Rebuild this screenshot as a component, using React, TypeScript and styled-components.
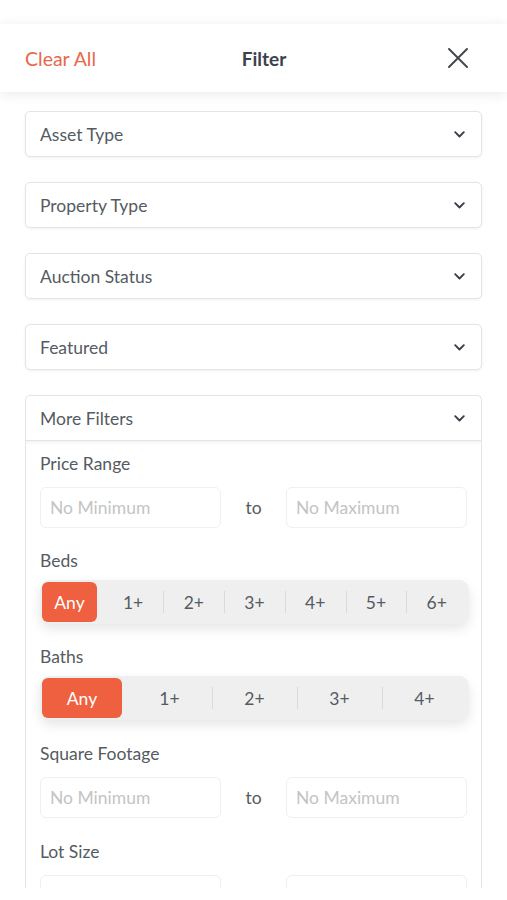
import styled, { createGlobalStyle } from "styled-components";

const GlobalStyle = createGlobalStyle`
  * { box-sizing: border-box; }
  body {
    margin: 0;
    background: #ffffff;
    font-family: Lato, "Open Sans", "Liberation Sans", sans-serif;
    color: #555b62;
  }
`;

const ORANGE = "#ee603f";

const bedOptions = ["Any", "1+", "2+", "3+", "4+", "5+", "6+"];
const bathOptions = ["Any", "1+", "2+", "3+", "4+"];

function Chevron() {
  return (
    <svg width="11" height="7" viewBox="0 0 11 7" fill="none">
      <path d="M1.2 1.2 L5.5 5.5 L9.8 1.2" stroke="#3a4048" strokeWidth="1.9" strokeLinecap="round" strokeLinejoin="round" />
    </svg>
  );
}

function CloseIcon() {
  return (
    <svg width="22" height="22" viewBox="0 0 22 22" fill="none">
      <path d="M2 2 L20 20 M20 2 L2 20" stroke="#44484d" strokeWidth="2" strokeLinecap="round" />
    </svg>
  );
}

function Dropdown({ label }: { label: string }) {
  return (
    <Select>
      <SelectLabel>{label}</SelectLabel>
      <Chevron />
    </Select>
  );
}

function RangeInputs({ empty }: { empty?: boolean }) {
  return (
    <RangeRow>
      <RangeInput placeholder={empty ? "" : "No Minimum"} />
      <To>{empty ? "" : "to"}</To>
      <RangeInput placeholder={empty ? "" : "No Maximum"} />
    </RangeRow>
  );
}

function Segmented({ options, activeWidth }: { options: string[]; activeWidth: number }) {
  return (
    <SegmentBar>
      {options.map((opt, i) => (
        <Segment key={opt} $divider={i > 1}>
          {i === 0 ? <ActiveSeg $width={activeWidth}>{opt}</ActiveSeg> : opt}
        </Segment>
      ))}
    </SegmentBar>
  );
}

export default function App() {
  return (
    <>
      <GlobalStyle />
      <Page>
        <Header>
          <ClearAll>Clear All</ClearAll>
          <Title>Filter</Title>
          <CloseButton>
            <CloseIcon />
          </CloseButton>
        </Header>
        <Content>
          <Dropdown label="Asset Type" />
          <Dropdown label="Property Type" />
          <Dropdown label="Auction Status" />
          <Dropdown label="Featured" />
          <MoreFilters>
            <MoreHead>
              <SelectLabel>More Filters</SelectLabel>
              <Chevron />
            </MoreHead>
            <Panel>
              <Section>
                <Label>Price Range</Label>
                <RangeInputs />
              </Section>
              <Section $top={23} $gap={9}>
                <Label>Beds</Label>
                <Segmented options={bedOptions} activeWidth={55} />
              </Section>
              <Section $top={23} $gap={9}>
                <Label>Baths</Label>
                <Segmented options={bathOptions} activeWidth={80} />
              </Section>
              <Section $top={24}>
                <Label>Square Footage</Label>
                <RangeInputs />
              </Section>
              <Section $top={24}>
                <Label>Lot Size</Label>
                <RangeInputs empty />
              </Section>
            </Panel>
          </MoreFilters>
        </Content>
      </Page>
    </>
  );
}

const Page = styled.div`
  height: 888px;
  overflow: hidden;
  padding-top: 24px;
  display: flex;
  flex-direction: column;
`;

const Header = styled.header`
  flex-shrink: 0;
  height: 68px;
  display: flex;
  align-items: center;
  justify-content: space-between;
  padding: 0 38px 0 25px;
  background: #ffffff;
  box-shadow: 0 2px 12px rgba(0, 0, 0, 0.09);
  position: relative;
  z-index: 1;
`;

const ClearAll = styled.button`
  border: none;
  background: none;
  padding: 0;
  width: 112px;
  text-align: left;
  font-family: inherit;
  font-size: 19.5px;
  color: #e8684a;
`;

const Title = styled.h1`
  margin: 0;
  font-size: 19px;
  font-weight: 700;
  color: #3b424b;
`;

const CloseButton = styled.button`
  border: none;
  background: none;
  padding: 0;
  width: 78px;
  display: flex;
  justify-content: flex-end;
`;

const Content = styled.main`
  flex: 1;
  min-height: 0;
  display: flex;
  flex-direction: column;
  gap: 25px;
  padding: 19px 25px 0;
`;

const Select = styled.div`
  flex-shrink: 0;
  height: 46px;
  display: flex;
  align-items: center;
  justify-content: space-between;
  padding: 0 16px 0 14px;
  border: 1px solid #e4e4e4;
  border-radius: 5px;
  box-shadow: 0 1px 3px rgba(0, 0, 0, 0.06);
  background: #ffffff;
`;

const SelectLabel = styled.span`
  font-size: 17.5px;
  color: #555b62;
`;

const MoreFilters = styled.div`
  flex: 1;
  min-height: 0;
  overflow: hidden;
  display: flex;
  flex-direction: column;
  border: 1px solid #e4e4e4;
  border-bottom: none;
  border-radius: 5px 5px 0 0;
`;

const MoreHead = styled.div`
  flex-shrink: 0;
  height: 45px;
  display: flex;
  align-items: center;
  justify-content: space-between;
  padding: 0 16px 0 14px;
  border-bottom: 1px solid #e4e4e4;
  box-shadow: 0 2px 3px rgba(0, 0, 0, 0.05);
`;

const Panel = styled.div`
  padding: 13px 14px 0;
  display: flex;
  flex-direction: column;
`;

const Section = styled.section<{ $top?: number; $gap?: number }>`
  display: flex;
  flex-direction: column;
  gap: ${({ $gap }) => $gap ?? 11}px;
  margin-top: ${({ $top }) => $top ?? 0}px;
`;

const Label = styled.div`
  font-size: 17.5px;
  line-height: 20px;
  color: #555b62;
`;

const RangeRow = styled.div`
  display: flex;
  align-items: center;
  margin-top: 2px;
`;

const RangeInput = styled.input`
  width: 181px;
  height: 41px;
  border: 1px solid #efefef;
  border-radius: 6px;
  padding: 0 9px;
  font-family: inherit;
  font-size: 17.5px;
  color: #555b62;
  outline: none;

  &::placeholder {
    color: #c4c4c4;
  }
`;

const To = styled.span`
  flex: 1;
  text-align: center;
  font-size: 17.5px;
  color: #555b62;
`;

const SegmentBar = styled.div`
  display: flex;
  align-items: center;
  height: 44px;
  width: 429px;
  padding: 2px;
  background: #efefef;
  border-radius: 10px;
  box-shadow: 0 5px 12px rgba(0, 0, 0, 0.1);
`;

const Segment = styled.div<{ $divider: boolean }>`
  flex: 1;
  height: 40px;
  display: flex;
  align-items: center;
  justify-content: center;
  font-size: 17.5px;
  color: #555b62;
  position: relative;

  &::before {
    content: "";
    display: ${({ $divider }) => ($divider ? "block" : "none")};
    position: absolute;
    left: 0;
    top: 9px;
    bottom: 9px;
    width: 1px;
    background: #dadada;
  }
`;

const ActiveSeg = styled.div<{ $width: number }>`
  width: ${({ $width }) => $width}px;
  height: 40px;
  margin-right: auto;
  display: flex;
  align-items: center;
  justify-content: center;
  border-radius: 6px;
  background: ${ORANGE};
  color: #ffffff;
  font-size: 17.5px;
`;
